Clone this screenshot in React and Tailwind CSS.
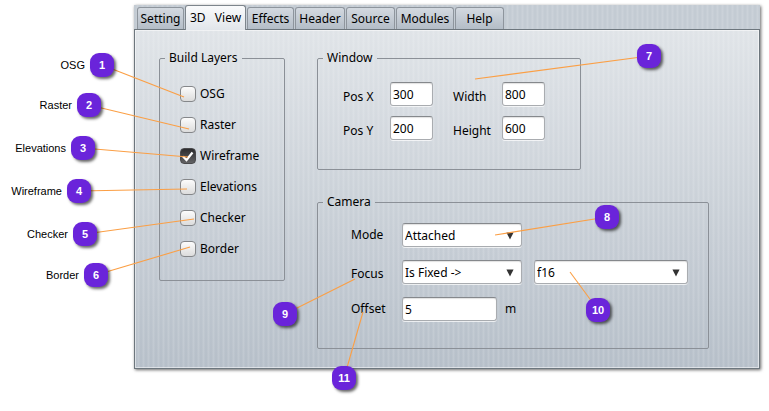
import React from 'react';

const TABS = [
    { name: 'Setting', width: 'w-[47px]' },
    { name: '3D   View', width: 'w-[61px]', active: true },
    { name: 'Effects', width: 'w-[47px]' },
    { name: 'Header', width: 'w-[50px]' },
    { name: 'Source', width: 'w-[49px]' },
    { name: 'Modules', width: 'w-[58px]' },
    { name: 'Help', width: 'w-[49px]' },
];

const LAYERS = [
    { name: 'OSG' },
    { name: 'Raster' },
    { name: 'Wireframe', checked: true },
    { name: 'Elevations' },
    { name: 'Checker' },
    { name: 'Border' },
];

// x / y is the centre of the badge, to is the point the line leads to
const CALLOUTS = [
    { id: 1, label: 'OSG', x: 102, y: 65, to: [184, 97] },
    { id: 2, label: 'Raster', x: 89, y: 105, to: [189, 129] },
    { id: 3, label: 'Elevations', x: 83, y: 148, to: [188, 157] },
    { id: 4, label: 'Wireframe', x: 79, y: 191, to: [187, 189] },
    { id: 5, label: 'Checker', x: 85, y: 234, to: [194, 219] },
    { id: 6, label: 'Border', x: 96, y: 275, to: [190, 247] },
    { id: 7, x: 649, y: 56, to: [475, 79] },
    { id: 8, x: 607, y: 217, to: [495, 235] },
    { id: 9, x: 285, y: 314, to: [355, 279] },
    { id: 10, x: 598, y: 310, to: [570, 272] },
    { id: 11, x: 344, y: 378, to: [363, 312] },
];

const FIELD =
    'h-6 rounded-[3px] border border-[#a9acb0] border-t-[#85888c] bg-white px-[2px] text-[12px] leading-4 text-black shadow-[0_1px_0_rgba(255,255,255,0.7),inset_0_1px_1px_rgba(0,0,0,0.12)] outline-none';

const Group = ({ title, className, children }) => (
    <fieldset className={`min-w-0 rounded-[2px] border border-[#8b9097] pl-[5px] ${className}`}>
        <legend className="px-1 leading-[18px]">{title}</legend>
        {children}
    </fieldset>
);

const LayerCheckbox = ({ name, checked }) => (
    <label className="flex h-[31px] items-center gap-1">
        <span className="relative block h-4 w-4">
            <input
                type="checkbox"
                defaultChecked={checked}
                className="peer block h-4 w-4 appearance-none rounded-[4px] border border-[#85878a] bg-linear-to-b from-[#fcfcfc] to-[#dcdcdc] checked:border-[#4a4a4c] checked:from-[#2c2c2e] checked:to-[#636365]"
            />
            <svg viewBox="0 0 16 16" className="pointer-events-none absolute inset-0 hidden h-4 w-4 peer-checked:block">
                <path d="M3 8.5 L6.5 12 L12.5 4.5" fill="none" stroke="#fff" strokeWidth="2.2" />
            </svg>
        </span>
        {name}
    </label>
);

const NumberField = ({ id, label, value }) => (
    <>
        <label htmlFor={id} className="leading-[18px]">{label}</label>
        <input id={id} type="text" defaultValue={value} className={`w-[43px] ${FIELD}`} />
    </>
);

const Dropdown = ({ id, label, value, className }) => (
    <span className={`relative block ${className}`}>
        <select id={id} aria-label={label} defaultValue={value} className={`block w-full appearance-none pt-px ${FIELD}`}>
            <option>{value}</option>
        </select>
        <svg viewBox="0 0 9 8" className="pointer-events-none absolute top-[9px] right-2 h-2 w-2">
            <path d="M0.5 0 H8.5 L4.5 8 Z" fill="#333" />
        </svg>
    </span>
);

const Callouts = () => (
    <div className="pointer-events-none absolute inset-0 font-['Liberation_Sans',Arial,sans-serif] text-[11px] leading-6">
        <svg className="absolute inset-0 h-full w-full">
            {CALLOUTS.map(({ id, x, y, to }) => (
                <line key={id} x1={x} y1={y} x2={to[0]} y2={to[1]} stroke="#fb9f45" strokeWidth="1.1" />
            ))}
        </svg>
        {CALLOUTS.map(({ id, label, x, y }) => (
            <div key={id} className="absolute flex" style={{ left: x - 12, top: y - 12 }}>
                {label && <span className="absolute right-full mr-[5px] whitespace-nowrap">{label}</span>}
                <span className="h-6 w-6 rounded-[9px] bg-[#6a24da] text-center font-bold text-white shadow-[2px_2px_3px_rgba(0,0,0,0.6)]">
                    {id}
                </span>
            </div>
        ))}
    </div>
);

const App = () => {
    return (
        <div className="relative min-h-screen bg-white pt-[5px] pr-[9px] pb-10 pl-[134px] font-['Noto_Sans','Open_Sans',sans-serif] text-[12px] text-black">
            <main className="bg-[#c3cbd3] bg-[repeating-linear-gradient(90deg,transparent_0px,transparent_2px,rgba(255,255,255,0.13)_3px,rgba(255,255,255,0.13)_4px,transparent_5px)] shadow-[1px_1px_3px_rgba(0,0,0,0.6)]">
                <div role="tablist" className="flex h-6 items-end gap-px pl-[3px]">
                    {TABS.map(({ name, width, active }) => (
                        <button
                            key={name}
                            type="button"
                            role="tab"
                            aria-selected={Boolean(active)}
                            className={`shrink-0 rounded-t-[3px] border border-b-0 text-center whitespace-pre ${width} ${
                                active
                                    ? 'relative -mb-px h-[25px] border-[#7d858c] bg-linear-to-b from-[#fafbfc] to-[#e1e5ea] pb-px leading-[22px]'
                                    : 'h-[22px] border-[#8e959d] bg-linear-to-b from-[#d3d9e0] to-[#b4bdc7] leading-[22px]'
                            }`}
                        >
                            {name}
                        </button>
                    ))}
                </div>

                <div className="flex items-start gap-8 border border-[#6d767d] bg-[repeating-linear-gradient(90deg,transparent_0px,transparent_2px,rgba(255,255,255,0.13)_3px,rgba(255,255,255,0.13)_4px,transparent_5px),linear-gradient(#e0e4e8,#b6bfc9)] pt-[19px] pr-[50px] pb-[19px] pl-6 shadow-[inset_0_0_0_1px_rgba(255,255,255,0.5)]">
                    <Group title="Build Layers" className="w-[126px] shrink-0 pb-4">
                        <div className="pt-[11px] pl-[15px]">
                            {LAYERS.map((layer) => (
                                <LayerCheckbox key={layer.name} {...layer} />
                            ))}
                        </div>
                    </Group>

                    <div className="flex min-w-0 flex-1 flex-col gap-[23px]">
                        <Group title="Window" className="w-[264px] pb-[29px]">
                            <div className="grid grid-cols-[47px_63px_49px_43px] items-end gap-y-[10px] pt-[15px] pl-5">
                                <NumberField id="pos-x" label="Pos X" value="300" />
                                <NumberField id="width" label="Width" value="800" />
                                <NumberField id="pos-y" label="Pos Y" value="200" />
                                <NumberField id="height" label="Height" value="600" />
                            </div>
                        </Group>

                        <Group title="Camera" className="pr-5 pb-[27px]">
                            <div className="flex flex-col gap-[13px] pt-3 pl-7">
                                <div className="flex items-center">
                                    <label htmlFor="mode" className="w-[51px]">Mode</label>
                                    <Dropdown id="mode" value="Attached" className="w-[120px]" />
                                </div>
                                <div className="flex items-end">
                                    <label htmlFor="focus" className="w-[51px] leading-5">Focus</label>
                                    <Dropdown id="focus" value="Is Fixed ->" className="w-[120px]" />
                                    <Dropdown id="target" label="Focus target" value="f16" className="ml-3 min-w-0 flex-1" />
                                </div>
                                <div className="flex items-center">
                                    <label htmlFor="offset" className="w-[51px]">Offset</label>
                                    <input id="offset" type="text" defaultValue="5" className={`w-[95px] ${FIELD}`} />
                                    <span className="ml-2">m</span>
                                </div>
                            </div>
                        </Group>
                    </div>
                </div>
            </main>
            <Callouts />
        </div>
    );
};

export default App;
